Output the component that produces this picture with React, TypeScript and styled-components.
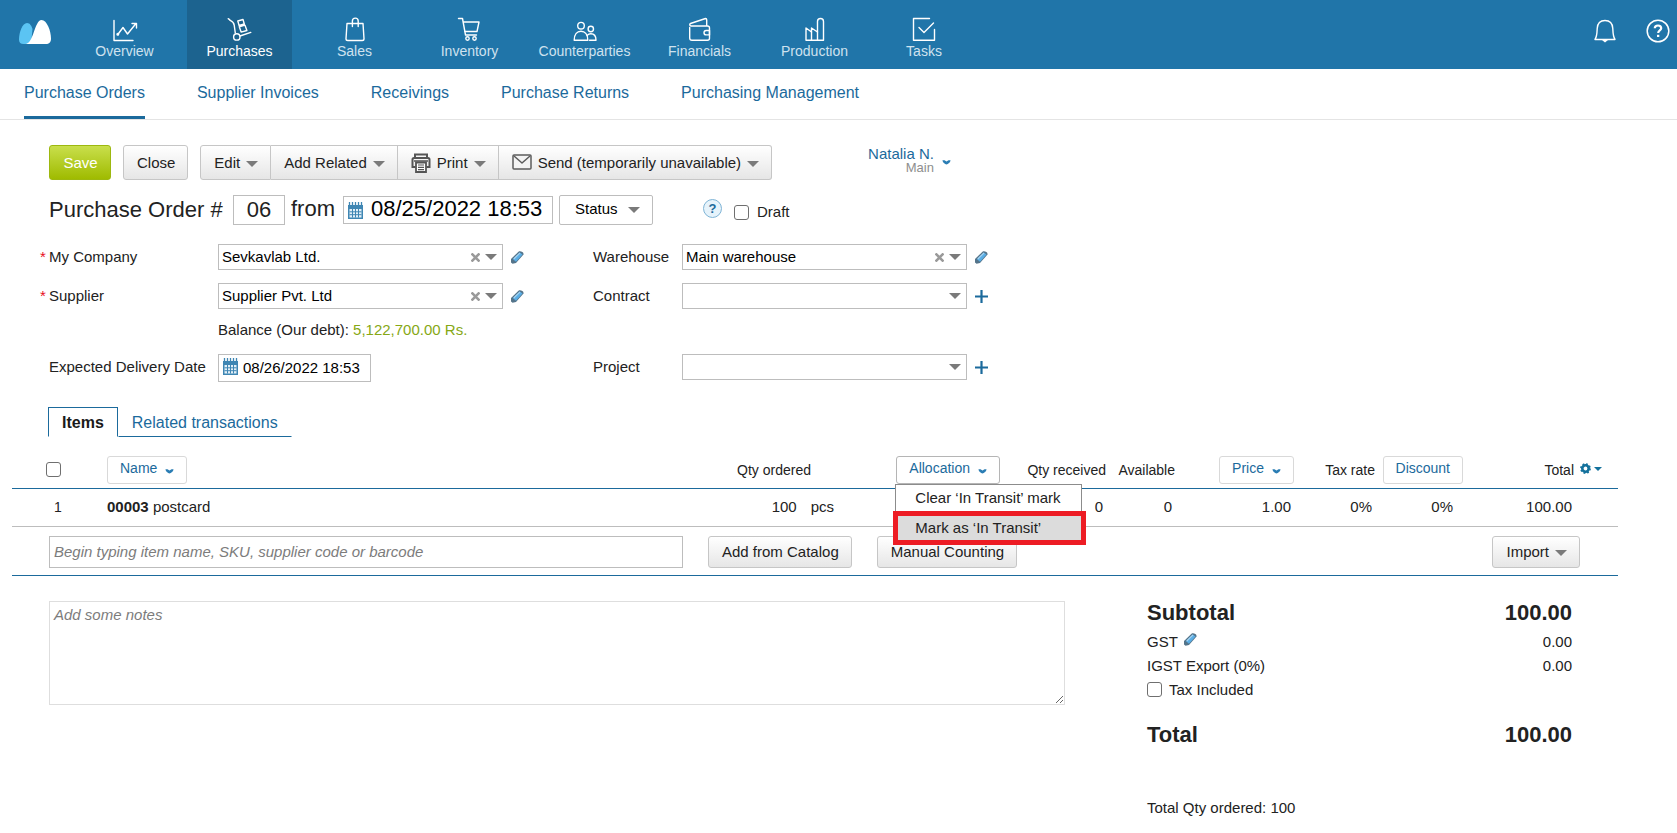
import React from "react";
import styled, { createGlobalStyle, css } from "styled-components";

const BLUE = "#1b6a9c";
const INK = "#222222";

const GlobalStyle = createGlobalStyle`
  *, *::before, *::after { box-sizing: border-box; }
  body {
    margin: 0;
    background: #ffffff;
    color: ${INK};
    font-family: "Liberation Sans", Arial, sans-serif;
    font-size: 15px;
    line-height: 20px;
  }
  button, input, select, textarea { font: inherit; color: inherit; margin: 0; }
  button { cursor: pointer; }
  a { color: ${BLUE}; text-decoration: none; }
`;

/* ---------- top bar ---------- */

const TopBar = styled.header`
  display: flex;
  align-items: stretch;
  height: 69px;
  padding-right: 7px;
  background: #2075a9;
`;

const Logo = styled.a`
  width: 72px;
  padding: 20px 0 0 19px;
  flex: none;
`;

const MainNav = styled.nav`
  display: flex;
  gap: 10px;
  flex: 1;
`;

const MainNavItem = styled.a<{ $active?: boolean; $narrow?: boolean }>`
  display: flex;
  flex-direction: column;
  align-items: center;
  width: ${(p) => (p.$narrow ? 94 : 105)}px;
  padding-top: 17px;
  font-size: 14px;
  line-height: 18px;
  color: ${(p) => (p.$active ? "#ffffff" : "#cfe2ef")};
  background: ${(p) => (p.$active ? "#1c638f" : "transparent")};
  svg { display: block; color: #ffffff; }
`;

const TopActions = styled.div`
  display: flex;
  gap: 30px;
  padding-top: 19px;
`;

const IconButton = styled.button`
  display: block;
  height: 24px;
  padding: 0;
  border: 0;
  background: none;
  color: #ffffff;
  svg { display: block; }
`;

const SubNav = styled.nav`
  display: flex;
  gap: 52px;
  height: 51px;
  padding: 0 24px;
  border-bottom: 1px solid #e4e4e4;
`;

const SubNavItem = styled.a<{ $active?: boolean }>`
  padding-top: 14px;
  font-size: 16px;
  border-bottom: 3px solid ${(p) => (p.$active ? BLUE : "transparent")};
`;

/* ---------- shared controls ---------- */

const raised = css`
  border: 1px solid #c6c6c6;
  background: linear-gradient(#ffffff, #e6e6e6);
`;

const Button = styled.button<{ $primary?: boolean; $small?: boolean }>`
  display: flex;
  align-items: center;
  justify-content: center;
  gap: 6px;
  min-width: 62px;
  height: ${(p) => (p.$small ? 32 : 35)}px;
  padding: 0 12px 0 13px;
  border-radius: 3px;
  white-space: nowrap;
  flex: none;
  ${raised}
  ${(p) =>
    p.$primary &&
    css`
      color: #ffffff;
      border-color: #9db80f;
      background: linear-gradient(#c9df4c, #9fbb00);
    `}
`;

const ButtonGroup = styled.div`
  display: flex;
  ${Button} { border-radius: 0; }
  ${Button} + ${Button} { border-left: 0; }
  ${Button}:first-child { border-radius: 3px 0 0 3px; }
  ${Button}:last-child { border-radius: 0 3px 3px 0; }
`;

const Caret = styled.span`
  width: 0;
  height: 0;
  flex: none;
  margin-top: 2px;
  border: 6px solid transparent;
  border-top-color: #7a7a7a;
  border-bottom: 0;
`;

const Check = styled.input.attrs({ type: "checkbox" })`
  appearance: none;
  display: block;
  flex: none;
  width: 15px;
  height: 15px;
  border: 1px solid #6f6f6f;
  border-radius: 3px;
  background: #ffffff;
`;

/* ---------- document head ---------- */

const Toolbar = styled.div`
  display: flex;
  align-items: center;
  gap: 12px;
  padding: 25px 49px 0;
`;

const UserLink = styled.a`
  display: flex;
  align-items: center;
  gap: 8px;
  margin-left: 84px;
  padding-bottom: 4px;
  line-height: 14px;
  text-align: right;
  svg { display: block; margin-top: 4px; }
`;

const UserRole = styled.span`
  display: block;
  font-size: 13px;
  color: #8e8e8e;
`;

const TitleRow = styled.div`
  display: flex;
  align-items: center;
  height: 30px;
  margin-top: 15px;
  padding: 0 49px;
  gap: 6px;
`;

const Title = styled.h1`
  margin: 0;
  font-size: 22px;
  font-weight: 400;
  line-height: 30px;
  min-width: 178px;
`;

const NumberInput = styled.input`
  width: 52px;
  height: 30px;
  padding: 0;
  border: 1px solid #bdbdbd;
  text-align: center;
  font-size: 22px;
`;

const From = styled.label`
  font-size: 22px;
  width: 46px;
  padding-bottom: 2px;
`;

const DateField = styled.div<{ $large?: boolean }>`
  display: flex;
  align-items: center;
  gap: ${(p) => (p.$large ? 8 : 5)}px;
  width: ${(p) => (p.$large ? 210 : 153)}px;
  height: 28px;
  padding-left: 4px;
  border: 1px solid #bdbdbd;
  color: #000000;
  svg { flex: none; margin-bottom: ${(p) => (p.$large ? 0 : 3)}px; }
  input {
    width: 100%;
    min-width: 0;
    padding: 0 0 ${(p) => (p.$large ? 2 : 0)}px;
    border: 0;
    background: none;
    font-size: ${(p) => (p.$large ? 22 : 15)}px;
  }
`;

const StatusButton = styled.button`
  display: flex;
  align-items: center;
  gap: 10px;
  width: 94px;
  height: 30px;
  padding: 0 14px 2px 15px;
  border: 1px solid #bdbdbd;
  border-radius: 2px;
  background: #ffffff;
  color: #000000;
`;

const HelpButton = styled.button`
  width: 19px;
  height: 19px;
  margin: 0 0 3px 44px;
  padding: 0;
  border: 1px solid #7fb4d6;
  border-radius: 50%;
  background: #e6f3fb;
  color: ${BLUE};
  font-size: 13px;
  font-weight: 700;
  line-height: 17px;
`;

const DraftLabel = styled.label`
  display: flex;
  align-items: center;
  gap: 8px;
  margin: 4px 0 0 6px;
`;

/* ---------- order form ---------- */

const Form = styled.form`
  display: grid;
  grid-template-columns: 178px 366px 98px 1fr;
  align-items: start;
  row-gap: 13px;
  padding: 19px 40px 0;
`;

const FieldLabel = styled.label<{ $required?: boolean }>`
  display: flex;
  line-height: 26px;
  &::before {
    content: "${(p) => (p.$required ? "*" : "")}";
    width: 9px;
    color: #e8101c;
  }
`;

const Field = styled.div`
  display: flex;
  align-items: center;
  gap: 8px;
`;

const SelectBox = styled.div`
  display: flex;
  align-items: center;
  gap: 5px;
  width: 285px;
  height: 26px;
  padding-right: 5px;
  border: 1px solid #bdbdbd;
  color: #000000;
  select {
    flex: 1;
    min-width: 0;
    height: 24px;
    padding: 0 0 0 3px;
    border: 0;
    appearance: none;
    background: none;
  }
  ${Caret} { margin-top: 0; }
`;

const SmallButton = styled.button`
  flex: none;
  padding: 0;
  border: 0;
  background: none;
  svg { display: block; }
`;

const Balance = styled.div`
  grid-column: 2 / 5;
  height: 20px;
  margin: -2px 0 1px;
  b { font-weight: 400; color: #86a815; }
`;

/* ---------- tabs ---------- */

const Tabs = styled.div`
  display: flex;
  margin: 25px 0 0 48px;
`;

const Tab = styled.button<{ $active?: boolean }>`
  height: 30px;
  padding: 2px 13px 0;
  border: 1px solid transparent;
  border-bottom-color: ${BLUE};
  background: none;
  color: ${BLUE};
  font-size: 16px;
  ${(p) =>
    p.$active &&
    css`
      border-color: ${BLUE};
      border-bottom-color: transparent;
      color: #1a1a1a;
      font-weight: 700;
    `}
`;

/* ---------- items table ---------- */

const Items = styled.section`
  margin: 12px 59px 0 12px;
`;

const Table = styled.table`
  width: 100%;
  table-layout: fixed;
  border-collapse: collapse;
`;

const Th = styled.th<{ $left?: boolean; $pad?: number }>`
  height: 39px;
  padding: 3px ${(p) => p.$pad ?? 0}px 0 0;
  border-bottom: 1px solid ${BLUE};
  font-size: 14px;
  font-weight: 400;
  text-align: ${(p) => (p.$left ? "left" : "right")};
  white-space: nowrap;
`;

const Td = styled.td<{ $left?: boolean; $pad?: number }>`
  height: 38px;
  padding: 0 ${(p) => p.$pad ?? 0}px 0 0;
  border-bottom: 1px solid #bdbdbd;
  text-align: ${(p) => (p.$left ? "left" : "right")};
  white-space: nowrap;
`;

const Inset = styled.div<{ $size: number }>`
  padding-left: ${(p) => p.$size}px;
  font-size: 14px;
`;

const Unit = styled.span`
  margin-left: 14px;
`;

const HeadButton = styled.button<{ $open?: boolean }>`
  display: inline-flex;
  align-items: center;
  gap: 8px;
  height: 28px;
  padding: 0 12px 3px;
  border: 1px solid ${(p) => (p.$open ? "#b5b5b5" : "#d9d9d9")};
  border-radius: 3px;
  background: #ffffff;
  color: ${BLUE};
  vertical-align: middle;
  svg { margin-top: 6px; }
`;

const TotalHead = styled.div`
  display: flex;
  align-items: center;
  justify-content: flex-end;
  gap: 6px;
`;

const GearButton = styled(SmallButton)`
  display: flex;
  align-items: center;
  gap: 3px;
  padding-bottom: 2px;
  color: #13719c;
`;

const TinyCaret = styled.span`
  border: 4px solid transparent;
  border-top-color: currentColor;
  border-bottom: 0;
`;

const MenuAnchor = styled.div`
  position: relative;
  display: inline-block;
`;

const Menu = styled.div`
  position: absolute;
  z-index: 1;
  top: 100%;
  left: -1px;
  width: 187px;
  border: 1px solid #8c8c8c;
  border-bottom: 0;
  background: #ffffff;
  text-align: left;
`;

const MenuItem = styled.button<{ $marked?: boolean }>`
  display: block;
  width: 100%;
  height: 27px;
  padding: 0 0 0 19px;
  border: 0;
  background: none;
  font-size: 15px;
  text-align: left;
  white-space: nowrap;
  ${(p) =>
    p.$marked &&
    css`
      width: 193px;
      height: 34px;
      margin: -1px 0 0 -3px;
      padding-left: 17px;
      border: 5px solid #ed1c24;
      background: #dcdcdc;
    `}
`;

const AddRow = styled.div`
  display: flex;
  align-items: center;
  height: 49px;
  padding: 2px 38px 0 37px;
  gap: 25px;
  border-bottom: 1px solid ${BLUE};
`;

const ItemSearch = styled.input`
  flex: 0 1 634px;
  min-width: 0;
  height: 32px;
  padding: 0 4px;
  border: 1px solid #bdbdbd;
  &::placeholder { color: #7c7c7c; font-style: italic; opacity: 1; }
`;

const Spacer = styled.div`
  flex: 1;
`;

/* ---------- notes and totals ---------- */

const Bottom = styled.section`
  display: flex;
  align-items: flex-start;
  gap: 82px;
  padding: 25px 105px 0 49px;
`;

const Notes = styled.textarea`
  flex: 1;
  min-width: 0;
  height: 104px;
  padding: 3px 4px;
  border: 1px solid #dedede;
  &::placeholder { color: #7c7c7c; font-style: italic; opacity: 1; }
`;

const Summary = styled.div`
  flex: none;
  width: 425px;
`;

const SummaryRow = styled.div<{ $strong?: boolean }>`
  display: flex;
  justify-content: space-between;
  align-items: center;
  height: 24px;
  ${(p) =>
    p.$strong &&
    css`
      height: 29px;
      padding-bottom: 4px;
      font-size: 22px;
      font-weight: 700;
      line-height: 24px;
    `}
`;

const TaxName = styled.span`
  display: flex;
  align-items: center;
  gap: 6px;
  ${SmallButton} { padding-bottom: 4px; }
`;

const TaxIncluded = styled.label`
  display: flex;
  align-items: center;
  gap: 7px;
  height: 24px;
  margin-bottom: 21px;
`;

const QtySummary = styled.p`
  margin: 46px 0 0;
`;

/* ---------- icons ---------- */

const Line = ({ children }: { children: React.ReactNode }) => (
  <svg width="28" height="25" viewBox="0 0 28 25" fill="none" stroke="currentColor" strokeWidth="1.4" strokeLinecap="round" strokeLinejoin="round" aria-hidden="true">
    {children}
  </svg>
);

const navItems = [
  { label: "Overview", icon: <><path d="M3 3.500v20h19" /><path d="M6.800 17.500l5.200-7 4.500 6.500 8.500-10.500M21 6.500h4.500V11" /><circle cx="6.800" cy="17.200" r=".8" /></> },
  { label: "Purchases", active: true, icon: <><path d="M2.200 1.700c1 .2 1.300 1 2 1.700 2.500 1 3.700 2.500 4 4.800l1.100 7.800M14 19l10.800-3.600" /><circle cx="10.800" cy="19.900" r="3.200" /><path d="M11.800 4l5.200-1.500 1.300 4.500-5.200 1.500zM13.300 9.800l5.700-1.600 1.900 5.300-5.800 1.600z" /></> },
  { label: "Sales", icon: <><path d="M6 6.500h16l1 15.200a1.800 1.800 0 0 1-1.800 1.800H6.800A1.800 1.800 0 0 1 5 21.700z" /><path d="M11.400 9.500V4a2.900 2.900 0 0 1 5.800 0v5.500" /></> },
  { label: "Inventory", icon: <><path d="M2.500 1.500h4l3 16.500h11" /><path d="M7.500 5h15.500l-2 9.500H9" /><circle cx="11.500" cy="21.500" r="1.700" /><circle cx="18.500" cy="21.500" r="1.700" /></> },
  { label: "Counterparties", icon: <><circle cx="10" cy="8.700" r="3.300" /><path d="M3.200 23.200c0-6 3-9 6.800-9s6.800 3 6.800 9z" /><circle cx="19.800" cy="12" r="2.700" /><path d="M18.500 23.200h6.500c0-4.500-2-6.500-5.200-6.500-1.500 0-2.500.5-3.500 1.500" /></> },
  { label: "Financials", icon: <><path d="M3.700 10.500v10.500a2.300 2.300 0 0 0 2.300 2.300h15.500a2 2 0 0 0 2-2V11a2 2 0 0 0-2-2H5a1.300 1.300 0 0 1-.5-2.500L19.500 1.500a1.200 1.200 0 0 1 1.200 1.200V9" /><path d="M23.500 13.500h-3.300a2.200 2.200 0 0 0 0 4.400h3.300z" /></> },
  { label: "Production", icon: <><path d="M5 23.200V11l5.500 4v-4l6 4V4.500a3 3 0 0 1 6 0v18.700z" /><path d="M10.500 15v8.200M16.500 15v8.200" /></> },
  { label: "Tasks", narrow: true, icon: <><path d="M19.500 1.500H3.500v21.700h21V12.500" /><path d="M9 10.500l5 5L23.500 6" /></> },
];

const BellIcon = () => (
  <svg width="22" height="24" viewBox="0 0 22 24" fill="none" stroke="currentColor" strokeWidth="1.400" strokeLinejoin="round" aria-hidden="true">
    <path d="M1 20.500c2-3 2-6 2.200-11C3.500 4.500 6 1.500 11 1.500s7.500 3 7.800 8c.2 5 .2 8 2.200 11z" />
    <path d="M8 21h6l-3 2.500z" fill="currentColor" stroke="none" />
  </svg>
);

const HelpIcon = () => (
  <svg width="24" height="24" viewBox="0 0 24 24" fill="none" stroke="currentColor" aria-hidden="true">
    <circle cx="12" cy="12" r="10.800" strokeWidth="1.500" />
    <path d="M8.800 9.300c0-1.700 1.300-2.800 3.200-2.800s3.200 1.100 3.200 2.700c0 2.200-3 2.200-3 4.700" strokeWidth="2.200" />
    <path d="M11 15.800h2.300V18H11z" fill="currentColor" stroke="none" />
  </svg>
);

const LogoIcon = () => (
  <svg width="32" height="24" viewBox="0 0 32 24" aria-hidden="true">
    <path d="M4.500 24C1.500 24 0 22.500 0 19.500 0 12 3.500 3 8 3c3 0 4.500 3 5.500 6L12 24z" fill="#5bc4f3" />
    <path d="M6.500 24c3.500-.4 5.500-4 8-11S19 0 22.500 0C28 0 32 11 32 18.500c0 4-2 5.500-5 5.500z" fill="#ffffff" />
  </svg>
);

const ChevronIcon = () => (
  <svg width="9" height="5" viewBox="0 0 9 5" fill="#2a7db4" aria-hidden="true">
    <path d="M.5.300h2l2 1.200 2-1.200h2C8.500 2.200 6 4.500 4.500 4.500S.5 2.200.5.300z" />
  </svg>
);

const PrintIcon = () => (
  <svg width="20" height="20" viewBox="0 0 20 20" fill="none" stroke="#555555" aria-hidden="true">
    <path d="M4 4V1.500h12V4" strokeWidth="2" />
    <path d="M4.500 14H1.500V6.500Q1.500 5 3 5h14q1.500 0 1.500 1.500V14h-3" strokeWidth="2" />
    <path d="M3 8h14" strokeWidth="1.500" />
    <path d="M5 9.500h10V19H5z" fill="#ffffff" strokeWidth="1.800" />
    <path d="M7 12h6M7 14.300h6M7 16.600h6" strokeWidth="1.200" />
  </svg>
);

const MailIcon = () => (
  <svg width="20" height="18" viewBox="0 0 20 18" fill="#f4f4f4" stroke="#5c5c5c" strokeWidth="1.500" strokeLinejoin="round" aria-hidden="true">
    <rect x="1" y="1" width="18" height="14" rx="1" />
    <path d="M2 2l8 7 8-7" fill="none" />
  </svg>
);

const CalendarIcon = () => (
  <svg width="15" height="17" viewBox="0 0 15 17" aria-hidden="true">
    <path d="M0 3h15v14H0z" fill="#3f86b3" />
    <path d="M1.500 0v4M4.500 0v4M7.500 0v4M10.500 0v4M13.500 0v4" stroke="#3f86b3" strokeWidth="1.300" />
    <path d="M1.500 7h12v8.500h-12z" fill="#e3f0f8" />
    <path d="M1.500 9.800h12M1.500 12.700h12M4.500 7v8.500M7.500 7v8.500M10.500 7v8.500" stroke="#3f86b3" strokeWidth="1" />
  </svg>
);

const PencilIcon = () => (
  <svg width="13" height="13" viewBox="0 0 13 13" aria-hidden="true">
    <path d="M0 8L7.500.7C9-.3 13 .8 12.500 3.500L5 12l-3.500.7L0 11.500z" fill="#54748a" />
    <path d="M2 8.300L8.800 1.500 11.500 3.600 5 10.700z" fill="#5aaee6" />
    <path d="M2.700 8L9 1.900" stroke="#a9d6f3" strokeWidth="1.200" />
  </svg>
);

const PlusIcon = () => (
  <svg width="13" height="13" viewBox="0 0 13 13" stroke={BLUE} strokeWidth="2.200" aria-hidden="true">
    <path d="M6.500 0v13M0 6.500h13" />
  </svg>
);

const ClearIcon = () => (
  <svg width="9" height="9" viewBox="0 0 9 9" stroke="#9a9a9a" strokeWidth="2.600" aria-hidden="true">
    <path d="M.5.500l8 8M8.500.500l-8 8" />
  </svg>
);

const GearIcon = () => (
  <svg width="11" height="11" viewBox="0 0 11 11" fill="none" stroke="currentColor" aria-hidden="true">
    <circle cx="5.500" cy="5.500" r="3.200" strokeWidth="2.600" />
    <circle cx="5.500" cy="5.500" r="4.600" strokeWidth="1.600" strokeDasharray="1.800 1.813" />
  </svg>
);

/* ---------- pieces ---------- */

type PickerProps = { id: string; label: string; value?: string; required?: boolean };

const Picker = ({ id, label, value, required }: PickerProps) => (
  <>
    <FieldLabel htmlFor={id} $required={required}>{label}</FieldLabel>
    <Field>
      <SelectBox>
        <select id={id} defaultValue={value ?? ""}>
          <option value={value ?? ""}>{value ?? ""}</option>
        </select>
        {value && <SmallButton type="button" aria-label={`Clear ${label}`}><ClearIcon /></SmallButton>}
        <Caret />
      </SelectBox>
      <SmallButton type="button" aria-label={value ? `Edit ${label}` : `Add ${label}`}>
        {value ? <PencilIcon /> : <PlusIcon />}
      </SmallButton>
    </Field>
  </>
);

const subNav = ["Purchase Orders", "Supplier Invoices", "Receivings", "Purchase Returns", "Purchasing Management"];

export default function App() {
  return (
    <>
      <GlobalStyle />
      <TopBar>
        <Logo href="#" aria-label="Home"><LogoIcon /></Logo>
        <MainNav>
          {navItems.map((item) => (
            <MainNavItem key={item.label} href="#" $active={item.active} $narrow={item.narrow}>
              <Line>{item.icon}</Line>
              {item.label}
            </MainNavItem>
          ))}
        </MainNav>
        <TopActions>
          <IconButton aria-label="Notifications"><BellIcon /></IconButton>
          <IconButton aria-label="Help"><HelpIcon /></IconButton>
        </TopActions>
      </TopBar>

      <SubNav>
        {subNav.map((name, i) => (
          <SubNavItem key={name} href="#" $active={i === 0}>{name}</SubNavItem>
        ))}
      </SubNav>

      <main>
        <Toolbar>
          <Button $primary>Save</Button>
          <Button>Close</Button>
          <ButtonGroup>
            <Button>Edit <Caret /></Button>
            <Button>Add Related <Caret /></Button>
            <Button><PrintIcon />Print <Caret /></Button>
            <Button><MailIcon />Send (temporarily unavailable) <Caret /></Button>
          </ButtonGroup>
          <UserLink href="#">
            <span>Natalia N.<UserRole>Main</UserRole></span>
            <ChevronIcon />
          </UserLink>
        </Toolbar>

        <TitleRow>
          <Title>Purchase Order #</Title>
          <NumberInput aria-label="Order number" defaultValue="06" />
          <From htmlFor="order-date">from</From>
          <DateField $large>
            <CalendarIcon />
            <input id="order-date" defaultValue="08/25/2022 18:53" />
          </DateField>
          <StatusButton>Status <Caret /></StatusButton>
          <HelpButton aria-label="Status help">?</HelpButton>
          <DraftLabel><Check />Draft</DraftLabel>
        </TitleRow>

        <Form>
          <Picker id="company" label="My Company" value="Sevkavlab Ltd." required />
          <Picker id="warehouse" label="Warehouse" value="Main warehouse" />
          <Picker id="supplier" label="Supplier" value="Supplier Pvt. Ltd" required />
          <Picker id="contract" label="Contract" />
          <Balance>Balance (Our debt): <b>5,122,700.00 Rs.</b></Balance>
          <FieldLabel htmlFor="delivery">Expected Delivery Date</FieldLabel>
          <Field>
            <DateField>
              <CalendarIcon />
              <input id="delivery" defaultValue="08/26/2022 18:53" />
            </DateField>
          </Field>
          <Picker id="project" label="Project" />
        </Form>

        <Tabs>
          <Tab $active>Items</Tab>
          <Tab>Related transactions</Tab>
        </Tabs>

        <Items>
          <Table>
            <colgroup>
              <col style={{ width: 95 }} />
              <col />
              <col style={{ width: 110 }} />
              <col style={{ width: 160 }} />
              <col style={{ width: 106 }} />
              <col style={{ width: 69 }} />
              <col style={{ width: 119 }} />
              <col style={{ width: 81 }} />
              <col style={{ width: 88 }} />
              <col style={{ width: 155 }} />
            </colgroup>
            <thead>
              <tr>
                <Th $left><Inset $size={34}><Check aria-label="Select all items" /></Inset></Th>
                <Th $left><HeadButton>Name <ChevronIcon /></HeadButton></Th>
                <Th $pad={29}>Qty ordered</Th>
                <Th>
                  <MenuAnchor>
                    <HeadButton $open>Allocation <ChevronIcon /></HeadButton>
                    <Menu>
                      <MenuItem>Clear ‘In Transit’ mark</MenuItem>
                      <MenuItem $marked>Mark as ‘In Transit’</MenuItem>
                    </Menu>
                  </MenuAnchor>
                </Th>
                <Th>Qty received</Th>
                <Th>Available</Th>
                <Th><HeadButton>Price <ChevronIcon /></HeadButton></Th>
                <Th>Tax rate</Th>
                <Th><HeadButton>Discount</HeadButton></Th>
                <Th $pad={16}>
                  <TotalHead>
                    Total
                    <GearButton aria-label="Column settings"><GearIcon /><TinyCaret /></GearButton>
                  </TotalHead>
                </Th>
              </tr>
            </thead>
            <tbody>
              <tr>
                <Td $left><Inset $size={42}>1</Inset></Td>
                <Td $left><b>00003</b> postcard</Td>
                <Td $pad={6}>100<Unit>pcs</Unit></Td>
                <Td />
                <Td $pad={3}>0</Td>
                <Td $pad={3}>0</Td>
                <Td $pad={3}>1.00</Td>
                <Td $pad={3}>0%</Td>
                <Td $pad={10}>0%</Td>
                <Td $pad={46}>100.00</Td>
              </tr>
            </tbody>
          </Table>
          <AddRow>
            <ItemSearch aria-label="Add item" placeholder="Begin typing item name, SKU, supplier code or barcode" />
            <Button $small>Add from Catalog</Button>
            <Button $small>Manual Counting</Button>
            <Spacer />
            <Button $small>Import <Caret /></Button>
          </AddRow>
        </Items>

        <Bottom>
          <Notes aria-label="Notes" placeholder="Add some notes" />
          <Summary>
            <SummaryRow $strong><span>Subtotal</span><span>100.00</span></SummaryRow>
            <SummaryRow>
              <TaxName>GST <SmallButton aria-label="Edit GST"><PencilIcon /></SmallButton></TaxName>
              <span>0.00</span>
            </SummaryRow>
            <SummaryRow><span>IGST Export (0%)</span><span>0.00</span></SummaryRow>
            <TaxIncluded><Check />Tax Included</TaxIncluded>
            <SummaryRow $strong><span>Total</span><span>100.00</span></SummaryRow>
            <QtySummary>Total Qty ordered: 100</QtySummary>
          </Summary>
        </Bottom>
      </main>
    </>
  );
}
